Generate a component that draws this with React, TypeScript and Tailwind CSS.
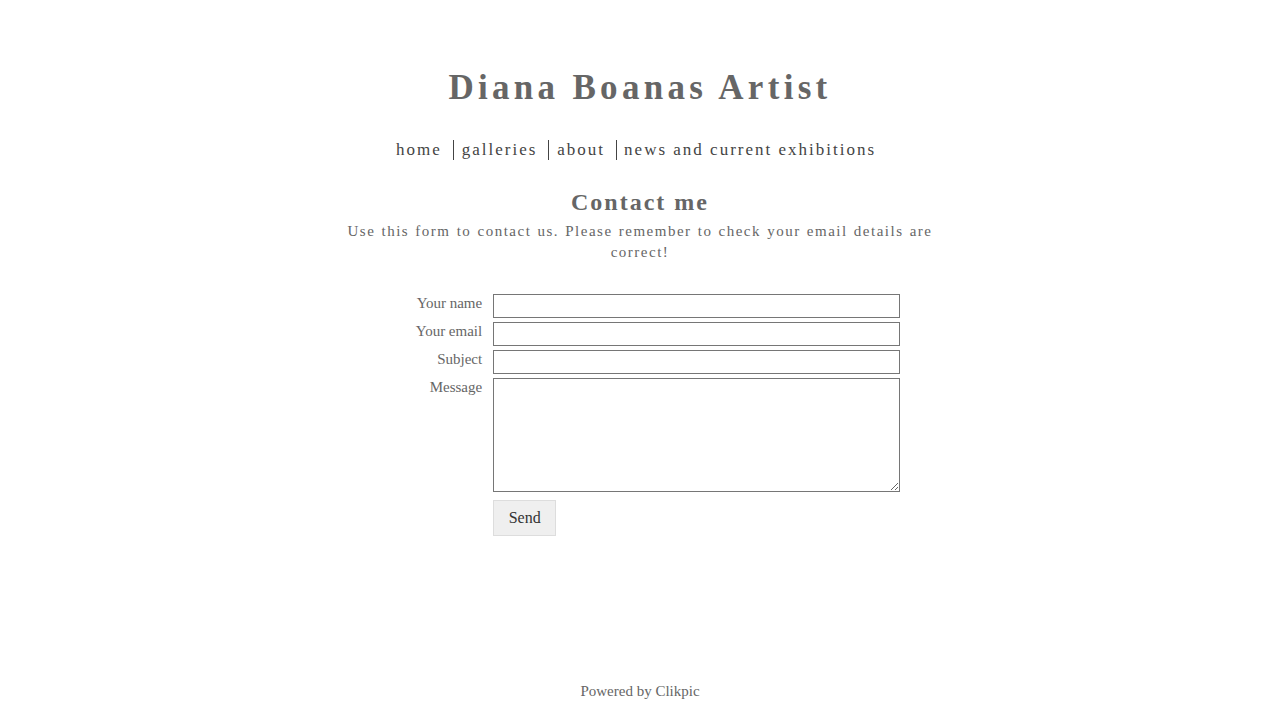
import React from "react";

export default function App() {
  const serif = { fontFamily: '"Liberation Serif", "Times New Roman", serif' };
  const rows = ["Your name", "Your email", "Subject"];
  return (
    <div className="flex h-[720px] flex-col bg-white text-[#666]" style={serif}>
      <div className="flex flex-1 flex-col items-center">
        <h1 className="mt-[65px] text-[35px] font-bold leading-[46px] tracking-[4.3px] text-[#666]">
          Diana Boanas Artist
        </h1>
        <nav className="mt-[29px] ml-[-8px] flex items-center text-[17px] leading-[20px] tracking-[2px] text-[#444]">
          <a className="pr-[11px]">home</a>
          <span className="h-[20px] w-px bg-[#444]" />
          <a className="pl-[8px] pr-[11px]">galleries</a>
          <span className="h-[20px] w-px bg-[#444]" />
          <a className="pl-[8px] pr-[11px]">about</a>
          <span className="h-[20px] w-px bg-[#444]" />
          <a className="pl-[7px]">news and current exhibitions</a>
        </nav>
        <h2 className="mt-[27px] text-[24px] font-bold leading-[30px] tracking-[2px] text-[#666]">
          Contact me
        </h2>
        <p className="mt-[4px] w-[585px] text-justify text-[15px] leading-[21px] tracking-[1.5px] [text-align-last:center]">
          Use this form to contact us. Please remember to check your email details are correct!
        </p>
        <div className="mt-[31px] ml-[36px] grid grid-cols-[auto_407px] gap-x-[11px] gap-y-[4px] text-[15px]">
          {rows.map((r) => (
            <React.Fragment key={r}>
              <label className="text-right leading-[18px]">{r}</label>
              <input className="h-[24px] border border-[#767676] bg-white" />
            </React.Fragment>
          ))}
          <label className="text-right leading-[18px]">Message</label>
          <textarea className="h-[114px] border border-[#767676] bg-white" />
          <span />
          <div className="pt-[4px]">
            <button className="h-[36px] w-[63px] border border-[#ddd] bg-[#efefef] text-[16px] text-[#333]">
              Send
            </button>
          </div>
        </div>
      </div>
      <footer className="pb-[19px] text-center text-[15px] leading-[20px]">Powered by Clikpic</footer>
    </div>
  );
}
